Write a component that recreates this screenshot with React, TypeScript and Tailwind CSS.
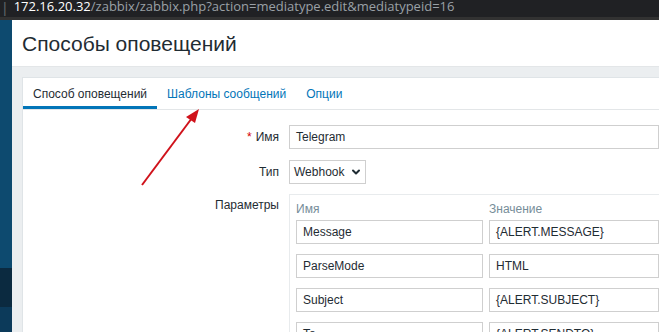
import { ChevronDown } from 'lucide-react'

const params = [
  { name: 'Message', value: '{ALERT.MESSAGE}' },
  { name: 'ParseMode', value: 'HTML' },
  { name: 'Subject', value: '{ALERT.SUBJECT}' },
  { name: 'To', value: '{ALERT.SENDTO}' },
]

function Field({ value, className = '' }: { value: string; className?: string }) {
  return (
    <div className={`h-[24px] shrink-0 border border-[#cfcfcf] bg-white flex items-center px-[6px] text-[12px] text-[#1f2c33] whitespace-nowrap overflow-hidden ${className}`}>
      {value}
    </div>
  )
}

export default function App() {
  return (
    <div className="relative w-[659px] h-[332px] overflow-hidden bg-[#ebeef0] font-['Liberation_Sans',Arial,sans-serif]">
      {/* browser address bar */}
      <div className="h-[17px] bg-[#202124] flex items-end overflow-hidden">
        <span className="text-[#5f6368] text-[14px] leading-[14px] ml-[3px] mb-[2px]">|</span>
        <div className="ml-[7px] text-[13px] leading-[14px] mb-[4px] whitespace-nowrap font-['Open_Sans',sans-serif]">
          <span className="text-white">172.16.20.32</span>
          <span className="text-[#9aa0a6]">/zabbix/zabbix.php?action=mediatype.edit&amp;mediatypeid=16</span>
        </div>
      </div>
      <div className="h-[3px] bg-[#323232]" />

      <div className="flex h-[312px]">
        {/* sidebar */}
        <div className="w-[12px] shrink-0 flex flex-col">
          <div className="h-[248px] shrink-0 bg-[#0d4a6f]" />
          <div className="h-[39px] shrink-0 bg-[#0b2a40]" />
          <div className="flex-1 bg-[#0c3a5a]" />
        </div>

        <div className="flex-1 flex flex-col">
          <div className="h-[47px] shrink-0 bg-white border-b border-[#e3e6e8] pl-[10px] flex items-center">
            <h1 className="text-[21px] text-[#1f2c33] font-normal pt-[1px]">Способы оповещений</h1>
          </div>

          <div className="flex-1 pl-[10px] pt-[10px]">
            <div className="bg-white h-full border-l border-t border-[#dfe4e7]">
              {/* tabs */}
              <div className="h-[32px] flex border-b border-[#e3e6e8] text-[12px]">
                <div className="px-[10px] flex items-center text-[#1f2c33] border-b-[3px] border-[#0275b8] pt-[3px]">Способ оповещений</div>
                <div className="px-[10px] flex items-center text-[#0275b8] pt-[1px]">Шаблоны сообщений</div>
                <div className="px-[10px] flex items-center text-[#0275b8] pt-[1px]">Опции</div>
              </div>

              {/* form */}
              <div className="pt-[15px] text-[12px] text-[#1f2c33]">
                <div className="flex items-center h-[24px]">
                  <div className="w-[266px] text-right pr-[10px]">
                    <span className="text-[#d40000] mr-[4px]">*</span>Имя
                  </div>
                  <Field value="Telegram" className="flex-1" />
                </div>
                <div className="flex items-center h-[24px] mt-[11px]">
                  <div className="w-[266px] text-right pr-[10px]">Тип</div>
                  <div className="h-[24px] w-[77px] border border-[#cfcfcf] flex items-center pl-[4px] gap-[6px]">
                    <span>Webhook</span>
                    <ChevronDown size={12} strokeWidth={4} />
                  </div>
                </div>
                <div className="flex mt-[10px]">
                  <div className="w-[266px] text-right pr-[10px] pt-[2px]">Параметры</div>
                  <div className="flex-1 border-l border-t border-[#e8ebed] pl-[6px] pt-[5px]">
                    <div className="flex gap-[6px] text-[#768d99] h-[20px]">
                      <div className="w-[187px]">Имя</div>
                      <div>Значение</div>
                    </div>
                    <div className="flex flex-col gap-[10px]">
                      {params.map(p => (
                        <div key={p.name} className="flex gap-[6px]">
                          <Field value={p.name} className="w-[187px]" />
                          <Field value={p.value} className="flex-1" />
                        </div>
                      ))}
                    </div>
                  </div>
                </div>
              </div>
            </div>
          </div>
        </div>
      </div>

      {/* red annotation arrow */}
      <svg className="absolute left-0 top-0 pointer-events-none" width="659" height="332">
        <line x1="142" y1="185" x2="192" y2="118" stroke="#d0121b" strokeWidth="2" />
        <polygon points="199,109 186,117 195,123" fill="#d0121b" />
      </svg>
    </div>
  )
}
